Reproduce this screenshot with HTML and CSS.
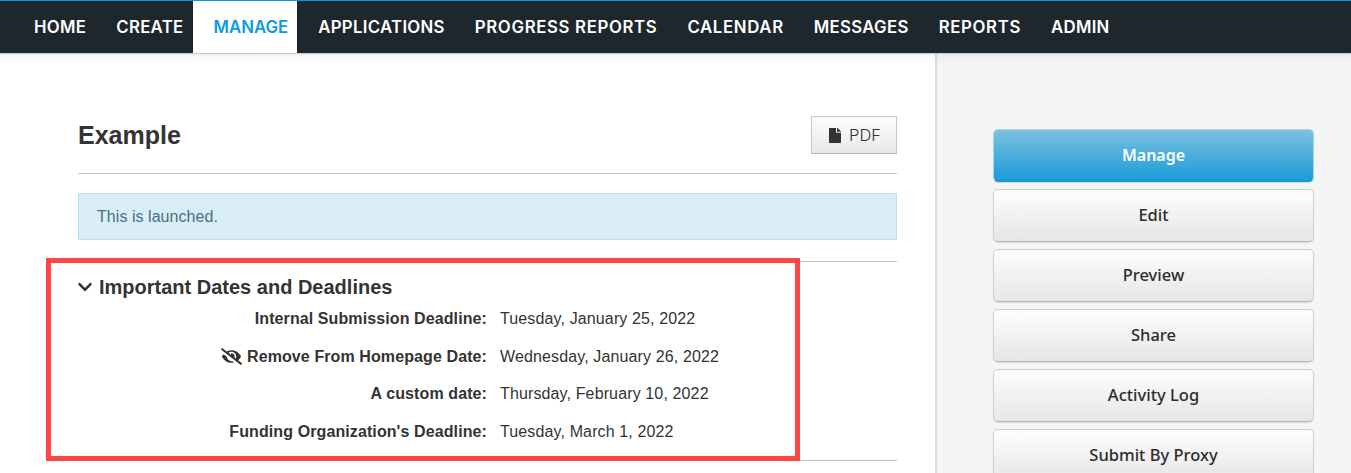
FILE: index.html
```html
<!DOCTYPE html>
<html lang="en">
<head>
<meta charset="utf-8">
<title>Example</title>
<link rel="stylesheet" href="styles.css">
</head>
<body>
<nav class="topnav">
  <a class="nav-item">HOME</a>
  <a class="nav-item">CREATE</a>
  <a class="nav-item active">MANAGE</a>
  <a class="nav-item">APPLICATIONS</a>
  <a class="nav-item wide">PROGRESS REPORTS</a>
  <a class="nav-item wide">CALENDAR</a>
  <a class="nav-item">MESSAGES</a>
  <a class="nav-item wide">REPORTS</a>
  <a class="nav-item">ADMIN</a>
</nav>
<div class="layout">
  <main class="content">
    <header class="title-row">
      <h1>Example</h1>
      <button class="pdf-btn">
        <svg class="pdf-icon" viewBox="0 0 384 512" width="12" height="15" preserveAspectRatio="none"><path d="M224 136V0H24C10.700 0 0 10.700 0 24v464c0 13.300 10.700 24 24 24h336c13.300 0 24-10.700 24-24V160H248c-13.200 0-24-10.800-24-24zm160-14.100v6.100H256V0h6.100c6.400 0 12.500 2.500 17 7l97.900 98c4.500 4.500 7 10.600 7 16.900z" fill="#333"/></svg>
        PDF
      </button>
    </header>
    <div class="notice">This is launched.</div>
    <section class="dates">
      <h2>
        <svg class="chevron" viewBox="0 0 448 512" width="14" height="16"><path d="M207.029 381.476L12.686 187.132c-9.373-9.373-9.373-24.569 0-33.941l22.667-22.667c9.357-9.357 24.522-9.375 33.901-.04L224 284.505l154.745-154.021c9.379-9.335 24.544-9.317 33.901.04l22.667 22.667c9.373 9.373 9.373 24.569 0 33.941L240.971 381.476c-9.373 9.372-24.569 9.372-33.942 0z" fill="#333"/></svg>
        Important Dates and Deadlines
      </h2>
      <dl class="date-list">
        <div class="date-row"><dt>Internal Submission Deadline:</dt><dd>Tuesday, January 25, 2022</dd></div>
        <div class="date-row"><dt>
          <svg class="eye-off" viewBox="0 0 640 512" width="21" height="17"><path d="M320 400c-75.850 0-137.250-58.710-142.900-133.110L72.200 185.820c-13.790 17.300-26.480 35.590-36.720 55.590a32.350 32.350 0 0 0 0 29.190C89.710 376.410 197.070 448 320 448c26.910 0 52.870-4 77.890-10.460L346 397.390a144.130 144.130 0 0 1-26 2.610zm313.820 58.100l-110.550-85.440a331.250 331.250 0 0 0 81.250-102.070 32.350 32.350 0 0 0 0-29.190C550.290 135.590 442.930 64 320 64a308.150 308.150 0 0 0-147.320 37.700L45.460 3.370A16 16 0 0 0 23 6.180L3.370 31.450A16 16 0 0 0 6.180 53.900l588.360 454.730a16 16 0 0 0 22.460-2.810l19.640-25.270a16 16 0 0 0-2.820-22.450zm-183.720-142l-39.300-30.380A94.750 94.750 0 0 0 416 256a94.760 94.760 0 0 0-121.310-92.210A47.650 47.650 0 0 1 304 192a46.640 46.640 0 0 1-1.540 10l-73.610-56.890A142.310 142.310 0 0 1 320 112a143.920 143.920 0 0 1 144 144c0 21.630-5.290 41.790-13.900 60.110z" fill="#333"/></svg>
          Remove From Homepage Date:</dt><dd>Wednesday, January 26, 2022</dd></div>
        <div class="date-row"><dt>A custom date:</dt><dd>Thursday, February 10, 2022</dd></div>
        <div class="date-row"><dt>Funding Organization's Deadline:</dt><dd>Tuesday, March 1, 2022</dd></div>
      </dl>
    </section>
    <div class="highlight"></div>
  </main>
  <aside class="sidebar">
    <a class="side-btn primary">Manage</a>
    <a class="side-btn">Edit</a>
    <a class="side-btn">Preview</a>
    <a class="side-btn">Share</a>
    <a class="side-btn">Activity Log</a>
    <a class="side-btn">Submit By Proxy</a>
  </aside>
</div>
</body>
</html>
```
FILE: styles.css
```css
* { box-sizing: border-box; }
html, body { height: 100%; }
body {
  margin: 0;
  height: 473px;
  overflow: hidden;
  background: #fff;
  color: #333;
  font-family: "Liberation Sans", Arial, sans-serif;
  font-size: 16px;
}
.topnav {
  display: flex;
  height: 53px;
  padding-left: 13px;
  background: #1f272e;
  border-top: 1px solid #0b97d8;
  box-shadow: 0 1px 1px #ccc, 0 3px 10px rgba(0,0,0,.08);
  position: relative;
  z-index: 2;
}
.nav-item {
  display: flex;
  align-items: center;
  padding: 0 9px 0 21px;
  color: #fff;
  font-family: Inter, sans-serif;
  font-size: 16.800px;
  font-weight: 600;
  letter-spacing: 0.3px;
  white-space: nowrap;
}
.nav-item.wide { letter-spacing: 0.65px; }
.nav-item.active {
  background: #fff;
  color: #0d9ade;
  letter-spacing: 0;
}
.layout { display: flex; height: 420px; }
.content {
  position: relative;
  width: 937px;
  flex: none;
  padding: 63px 38px 0 78px;
  border-right: 2px solid #dcdddd;
}
.title-row {
  display: flex;
  justify-content: space-between;
  align-items: flex-start;
  height: 58px;
  border-bottom: 1px solid #c4c4c4;
}
h1 {
  margin: 4px 0 0;
  font-size: 25px;
  line-height: 30px;
  font-weight: 700;
}
.pdf-btn {
  display: flex;
  align-items: center;
  justify-content: center;
  gap: 8px;
  width: 86px;
  height: 38px;
  padding: 0 0 0 2px;
  border: 1px solid #c8c8c8;
  border-bottom-color: #b4b4b4;
  background: linear-gradient(#fdfdfd, #e8e8e8);
  color: #333;
  font-family: Inter, sans-serif;
  font-size: 16.500px;
  font-weight: 300;
}
.notice {
  margin-top: 19px;
  height: 47px;
  padding-left: 18px;
  line-height: 46px;
  background: #d9edf6;
  border: 1px solid #bcdff0;
  color: #4a6f80;
  font-size: 16px;
  letter-spacing: 0.05px;
}
.dates {
  margin-top: 21px;
  height: 200px;
  border-top: 1px solid #c4c4c4;
  border-bottom: 1px solid #c4c4c4;
  padding-top: 12px;
}
h2 {
  display: flex;
  align-items: center;
  gap: 7px;
  margin: 0;
  font-size: 20px;
  line-height: 26px;
  font-weight: 700;
}
.chevron { flex: none; }
.date-list { margin: 7px 0 0; }
.date-row {
  display: flex;
  height: 37.600px;
  font-size: 16px;
  line-height: 24px;
  letter-spacing: 0.13px;
}
dt {
  width: 409px;
  text-align: right;
  font-weight: 700;
  white-space: nowrap;
  letter-spacing: 0.1px;
}
dd { margin: 0 0 0 13px; white-space: nowrap; }
.eye-off { vertical-align: -3px; }
.highlight {
  position: absolute;
  left: 46px;
  top: 205px;
  width: 754px;
  height: 203px;
  border: 5px solid #ff4545;
  pointer-events: none;
}
.sidebar {
  flex: 1;
  display: flex;
  flex-direction: column;
  gap: 7px;
  padding: 76px 37px 0 56px;
  background: #f4f5f5;
}
.side-btn {
  flex: none;
  display: flex;
  align-items: center;
  justify-content: center;
  height: 53px;
  padding-bottom: 2px;
  border: 1px solid #cfcfcf;
  border-bottom-color: #b8b8b8;
  border-radius: 5px;
  box-shadow: 0 1px 1px rgba(0,0,0,.12);
  background: linear-gradient(#fdfdfd, #e6e6e6);
  color: #2c2c2c;
  font-family: "Noto Sans", sans-serif;
  font-size: 16.500px;
  font-weight: 500;
}
.side-btn.primary {
  border-color: #a9d5ea #a9d5ea #1a8fc9;
  background: linear-gradient(#7dc1e0, #199bd8);
  color: #fff;
  font-size: 16px;
  font-weight: 600;
}
```
